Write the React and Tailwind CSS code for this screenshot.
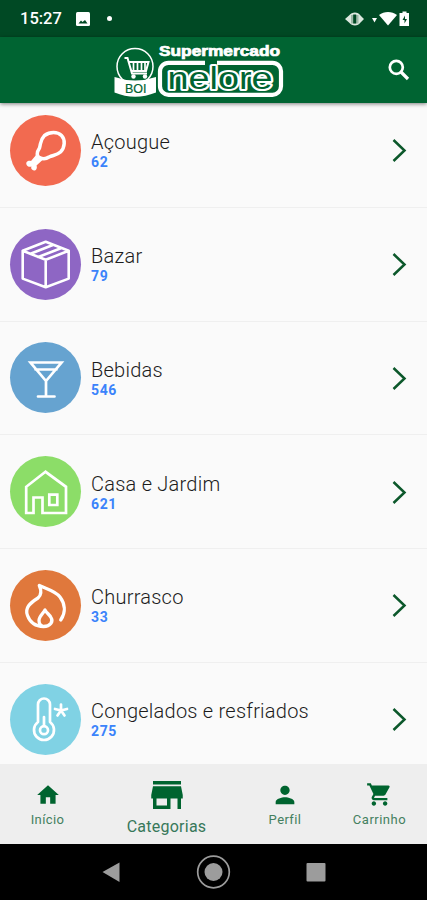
import { MdHome, MdStore, MdPerson, MdShoppingCart } from "react-icons/md";

const Drumstick = () => (
  <>
    <path strokeWidth="3.500" d="M29.500 42.500c-3-1.500-3-5 0-9.500 1.500-5 .5-8 5-12.500 5.500-4 13-4 17 0s3.500 12-1 16.500c-4 3.500-7 3-11.500 5-3.500 2.500-6 2.500-9.500.5z" />
    <path d="M26.500 39.500l6 5.500-6 5.500c1.500 4-2 6.500-4.500 4-1-1-1-2-.5-3-1.500.5-3.500.5-4.500-1-2-3 .5-5.500 4-4.500z" fill="white" stroke="none" />
  </>
);
const Box = () => (
  <path strokeWidth="2.600" d="M35.700 12.800L12.700 21.800V49.600L35.700 58.300 58.700 49.600V21.800zM12.700 21.800L35.700 30.800 58.700 21.800M35.700 30.800V58.300M20.500 24.800L43.500 15.800M28.300 28L51.500 19" />
);
const Glass = () => (
  <path strokeWidth="2.700" strokeLinejoin="miter" d="M20.500 20.500H51.500L36 39zM25.500 27.500H46.500M36 39V54.500M28 54.500H44.500" />
);
const House = () => (
  <path strokeWidth="2.700" strokeLinejoin="miter" d="M35.500 15.800L16.200 30.800V57H23.500V41.500H32.500V57H56V30.800zM39.300 38.700h8v10.300h-8z" />
);
const Flame = () => (
  <path strokeWidth="3.300" d="M50.700 50C56.500 41.500 54.500 33 50 27 45 20.500 37.500 19.500 29.300 15.500 31.500 20.500 31.500 25 28 28 20 33 14.500 38 17.500 45.500 20 52.500 26 56.500 33.500 56.500 40.500 56.500 43.500 51.500 41 47.500 39 44 37 43.500 35 40 33.500 43 29 46.500 29 50.500 29 54 31 56 33.500 56.500" />
);
const Thermometer = () => (
  <>
    <path strokeWidth="2.700" d="M28 38V20.500a6 6 0 0 1 12 0V38a10 10 0 1 1-12 0z" />
    <circle cx="34" cy="46.200" r="4" strokeWidth="2.700" />
    <path strokeWidth="2.700" d="M34 33V42M51 20.500V26.500M51 26.500l-6-1.500M51 26.500l6-1.500M51 26.500l-3.500 5M51 26.500l3.500 5" />
  </>
);

const categories = [
  { name: "Açougue", count: 62, color: "bg-[#f26a50]", Icon: Drumstick },
  { name: "Bazar", count: 79, color: "bg-[#8e66c4]", Icon: Box },
  { name: "Bebidas", count: 546, color: "bg-[#66a3d0]", Icon: Glass },
  { name: "Casa e Jardim", count: 621, color: "bg-[#8cdd68]", Icon: House },
  { name: "Churrasco", count: 33, color: "bg-[#e0783c]", Icon: Flame },
  { name: "Congelados e resfriados", count: 275, color: "bg-[#80d2e4]", Icon: Thermometer },
];

function StatusBar() {
  return (
    <div className="flex h-[37px] items-center bg-[#004924] pl-[20px] pr-[17px] text-white">
      <span className="pt-[2px] text-[16.500px] font-medium leading-none">15:27</span>
      <svg className="ml-[14px]" width="14" height="14" viewBox="0 0 14 14">
        <rect width="14" height="14" rx="1.500" fill="white" />
        <path d="M2.500 11.500l2.500-3 1.500 1.500L9 8l2.500 3.500z" fill="#004924" />
      </svg>
      <span className="ml-[17px] size-[5px] rounded-full bg-white" />
      <svg className="ml-auto" width="65" height="20" viewBox="0 0 65 20">
        <path d="M0 10l4-3.500C7 2.500 13 2.500 15.500 6.500L19 10l-3.500 3.500c-2.500 4-8.500 4-11.500 0z" fill="#dce8df" />
        <rect x="6" y="6" width="7.500" height="8.500" fill="#9db8a7" />
        <rect x="8.200" y="5.500" width="3" height="9" fill="#004924" />
        <path d="M27 9h5l-2.500 4.500z" fill="white" />
        <path d="M34 6c5-4 13-4 18 0l-9 10.500z" fill="white" />
        <path d="M57.500 2.500h4v1.500h2.500v13h-9.500v-13h3z" fill="white" />
        <path d="M60 6.500l-2.500 4.500h2v3.500l2.500-4.500h-2z" fill="#004924" />
      </svg>
    </div>
  );
}

function Logo() {
  return (
    <svg width="172" height="58" viewBox="0 0 172 58" role="img" aria-label="Supermercado Boi Nelore">
      <circle cx="22" cy="25.500" r="18" fill="none" stroke="white" strokeWidth="1.500" />
      <path d="M11.500 17h3l4.500 15.500h15M15.500 21h20l-2.500 9H18.500" fill="none" stroke="white" strokeWidth="2" />
      <path d="M20.500 21v9M24.500 21v9M28.500 21v9M32 21v9" stroke="white" strokeWidth="1.700" />
      <circle cx="20.500" cy="35.500" r="2.200" fill="white" />
      <circle cx="32" cy="35.500" r="2.200" fill="white" />
      <path d="M1.500 36Q22 43 43 36V51.500Q22 60 1.500 51.500z" fill="white" />
      <text x="12" y="52" textLength="21.500" lengthAdjust="spacingAndGlyphs" fontSize="12.500" fill="#006432" stroke="#006432" strokeWidth=".2" className="font-['Liberation_Sans']">BOI</text>
      <rect x="47" y="21.800" width="121" height="32" rx="8.500" fill="none" stroke="white" strokeWidth="4.200" />
      <text x="46" y="15" textLength="121" lengthAdjust="spacingAndGlyphs" fontSize="14" fontWeight="700" fill="white" stroke="white" strokeWidth=".7" className="font-['Liberation_Sans']">Supermercado</text>
      <rect x="92" y="19" width="12" height="8" fill="#006432" />
      <text
        x="54.500"
        y="48"
        textLength="105"
        lengthAdjust="spacingAndGlyphs"
        fontSize="31"
        fontWeight="500"
        fill="#006432"
        stroke="white"
        strokeWidth="4"
        strokeLinejoin="round"
        paintOrder="stroke"
        className="font-['Liberation_Sans']"
      >
        nelore
      </text>
    </svg>
  );
}

function Row({ item }) {
  const { name, count, color, Icon } = item;
  return (
    <li className="flex h-[113.750px] shrink-0 items-center border-b border-[#efefef] pl-[10px] pr-[20px]">
      <span className={`size-[71px] shrink-0 rounded-full ${color}`}>
        <svg width="71" height="71" viewBox="0 0 71 71" fill="none" stroke="white" strokeWidth="3" strokeLinejoin="round" strokeLinecap="round">
          <Icon />
        </svg>
      </span>
      <div className="ml-[10px]">
        <div className="whitespace-nowrap text-[20px] font-[350] leading-[24px] tracking-[0.240px] text-[#1c1c1c]">{name}</div>
        <div className="text-[14px] font-bold leading-[16px] tracking-[0.6px] text-[#3b83fb]">{count}</div>
      </div>
      <svg className="ml-auto" width="15" height="24" viewBox="0 0 15 24" fill="none" stroke="#0c582b" strokeWidth="2.500">
        <path d="M1.500 2L12.500 12.500 1.500 23" />
      </svg>
    </li>
  );
}

export default function App() {
  return (
    <div className="flex h-[900px] w-[427px] flex-col overflow-hidden bg-[#fafafa] font-['Roboto',sans-serif]">
      <StatusBar />
      <header className="z-10 flex h-[66px] shrink-0 items-center bg-[#006432] pl-[113px] pr-[17px] shadow-[0_1px_4px_rgba(0,0,0,0.5)]">
        <Logo />
        <svg className="ml-auto" width="22" height="22" viewBox="0 0 22 22" fill="none" stroke="white" strokeWidth="2.700">
          <circle cx="8.300" cy="8.300" r="6.500" />
          <path d="M13 13L20 20" strokeWidth="3.200" />
        </svg>
      </header>
      <ul className="-mt-[9px] flex h-[670px] shrink-0 flex-col overflow-hidden">
        {categories.map((item) => (
          <Row key={item.name} item={item} />
        ))}
      </ul>
      <nav className="z-10 flex h-[80px] shrink-0 bg-[#eee] text-[#00642f]">
        <div className="flex w-[95px] flex-col items-center pt-[18px]">
          <MdHome className="size-[26px]" />
          <span className="mt-[4px] text-[13px] leading-[16px] tracking-[0.4px] text-[#44805f]">Início</span>
        </div>
        <div className="flex w-[143px] flex-col items-center pt-[10px]">
          <MdStore className="size-[42px]" />
          <span className="mt-[1px] text-[16px] leading-[20px] tracking-[0.250px] text-[#37785a]">Categorias</span>
        </div>
        <div className="flex w-[94px] flex-col items-center pt-[17px]">
          <MdPerson className="size-[28px]" />
          <span className="mt-[3px] text-[13px] leading-[16px] tracking-[0.4px] text-[#44805f]">Perfil</span>
        </div>
        <div className="flex w-[95px] flex-col items-center pt-[17px]">
          <MdShoppingCart className="size-[27px]" />
          <span className="mt-[4px] text-[13px] leading-[16px] tracking-[0.5px] text-[#44805f]">Carrinho</span>
        </div>
      </nav>
      <div className="h-[56px] bg-black">
        <svg width="427" height="56" viewBox="0 0 427 56" fill="#9c9c9c">
          <path d="M102.500 28L119.500 18.500V38z" />
          <circle cx="213.500" cy="28" r="15.800" fill="none" stroke="#9c9c9c" strokeWidth="1.700" />
          <circle cx="213.500" cy="28" r="9" />
          <rect x="306.500" y="19" width="19" height="18.500" rx="1" />
        </svg>
      </div>
    </div>
  );
}
